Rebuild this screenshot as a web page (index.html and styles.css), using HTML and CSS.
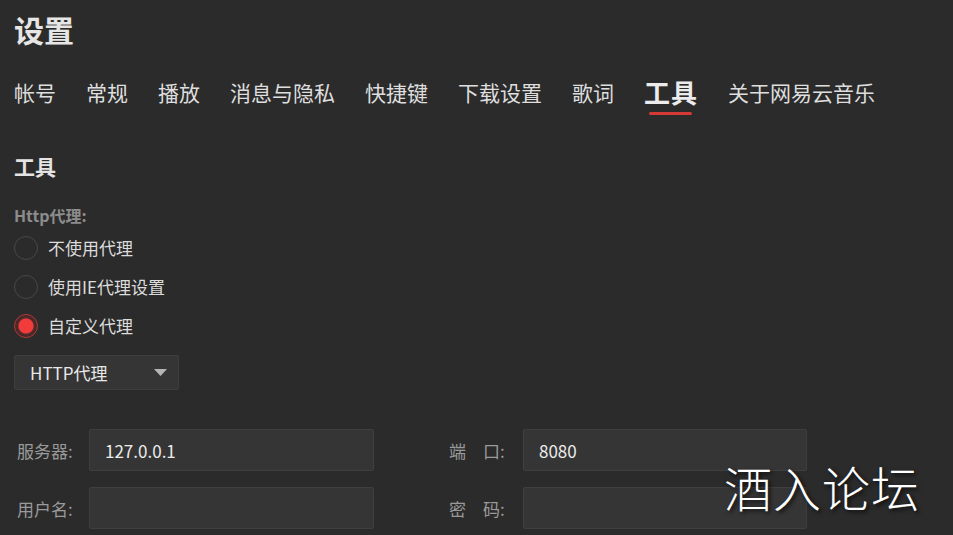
FILE: index.html
```html
<!DOCTYPE html>
<html lang="zh-CN">
<head>
<meta charset="utf-8">
<title>设置</title>
<link rel="stylesheet" href="styles.css">
</head>
<body>
<div class="page">
  <h1 class="title">设置</h1>
  <nav class="tabs">
    <span class="tab">帐号</span>
    <span class="tab">常规</span>
    <span class="tab">播放</span>
    <span class="tab">消息与隐私</span>
    <span class="tab">快捷键</span>
    <span class="tab">下载设置</span>
    <span class="tab">歌词</span>
    <span class="tab active">工具</span>
    <span class="tab">关于网易云音乐</span>
  </nav>

  <h2 class="section">工具</h2>
  <div class="group-label">Http代理:</div>
  <div class="radios">
    <div class="radio-row"><span class="radio"></span><span class="radio-text">不使用代理</span></div>
    <div class="radio-row"><span class="radio"></span><span class="radio-text">使用IE代理设置</span></div>
    <div class="radio-row"><span class="radio checked"></span><span class="radio-text">自定义代理</span></div>
  </div>

  <div class="select">
    <span class="select-text">HTTP代理</span>
    <svg class="select-arrow" width="13" height="7" viewBox="0 0 13 7"><path d="M0 0 H13 L6.5 7 Z" fill="#b5b5b5"/></svg>
  </div>

  <div class="form">
    <label class="flabel">服务器:</label>
    <div class="input"><span class="input-text">127.0.0.1</span></div>
    <span class="spacer"></span>
    <label class="flabel">端&emsp;口:</label>
    <div class="input"><span class="input-text">8080</span></div>

    <label class="flabel">用户名:</label>
    <div class="input"></div>
    <span class="spacer"></span>
    <label class="flabel">密&emsp;码:</label>
    <div class="input"></div>
  </div>
</div>
<div class="watermark">酒入论坛</div>
</body>
</html>
```

FILE: styles.css
```css
html, body {
  margin: 0;
  padding: 0;
  background: #2b2b2b;
  width: 953px;
  height: 535px;
  overflow: hidden;
  font-family: "Noto Sans CJK SC", "Noto Sans", sans-serif;
  color: #dcdcdc;
}

.page {
  padding: 14px 0 0 14px;
}

.title {
  margin: 0;
  font-size: 30px;
  line-height: 30px;
  font-weight: 700;
  color: #e6e6e6;
}

.tabs {
  margin-top: 35px;
  display: flex;
  align-items: center;
  gap: 30px;
  height: 26px;
}

.tab {
  font-size: 21px;
  line-height: 26px;
  color: #dedede;
  position: relative;
  white-space: nowrap;
}

.tab.active {
  font-size: 26px;
  font-weight: 700;
  color: #ececec;
  letter-spacing: 1px;
}

.tab.active::after {
  content: "";
  position: absolute;
  left: 5px;
  top: 33px;
  width: 43px;
  height: 3px;
  border-radius: 2px;
  background: #d33a36;
}

.section {
  margin: 50px 0 0 0;
  font-size: 21px;
  line-height: 22px;
  font-weight: 700;
  color: #e4e4e4;
}

.group-label {
  margin-top: 29px;
  font-size: 16px;
  line-height: 18px;
  font-weight: 700;
  color: #8c8c8c;
}

.radios {
  margin-top: 4px;
  display: flex;
  flex-direction: column;
}

.radio-row {
  height: 39px;
  display: flex;
  align-items: center;
  gap: 10px;
}

.radio {
  box-sizing: border-box;
  width: 24px;
  height: 24px;
  border-radius: 50%;
  border: 1px solid #474747;
  flex: none;
}

.radio.checked {
  border: 1px solid #b83a3a;
  background: radial-gradient(circle, #f23c3c 0 7px, #5a2a2a 8px, #3a2727 11px);
}

.radio-text {
  font-size: 17px;
  line-height: 20px;
  color: #dcdcdc;
}

.select {
  margin-top: 10px;
  box-sizing: border-box;
  width: 165px;
  height: 35px;
  background: #353535;
  border: 1px solid #3e3e3e;
  border-radius: 2px;
  display: flex;
  align-items: center;
  justify-content: space-between;
  padding: 0 11px 0 15px;
}

.select-text {
  font-size: 17px;
  color: #e8e8e8;
}

.form {
  margin-top: 39px;
  padding-left: 3px;
  display: grid;
  grid-template-columns: 72px 285px 75px 74px 284px;
  grid-auto-rows: 42px;
  row-gap: 16px;
  align-items: center;
}

.flabel {
  font-size: 17px;
  color: #9a9a9a;
  white-space: nowrap;
}

.input {
  box-sizing: border-box;
  height: 42px;
  background: #353535;
  border: 1px solid #3f3f3f;
  border-radius: 2px;
  display: flex;
  align-items: center;
  padding-left: 15px;
}

.input-text {
  font-size: 17px;
  color: #ececec;
}

.watermark {
  position: absolute;
  left: 724px;
  top: 456px;
  font-size: 48px;
  line-height: 60px;
  font-weight: 300;
  color: #ffffff;
  letter-spacing: 1px;
  text-shadow: 2px 2px 4px rgba(0,0,0,0.8);
  font-family: "Noto Sans CJK SC", sans-serif;
}
```
